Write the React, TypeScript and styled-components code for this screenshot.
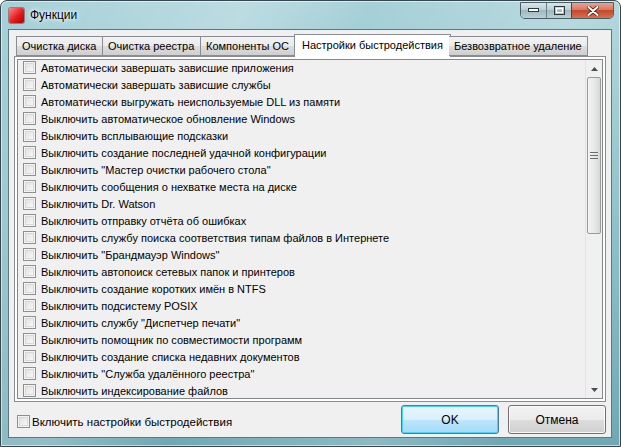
import styled, { createGlobalStyle } from 'styled-components';

const Global = createGlobalStyle`
    html, body {
        margin: 0;
        padding: 0;
        background: #ffffff;
    }
    * {
        box-sizing: border-box;
    }
`

const Window = styled.div`
    width: 621px;
    height: 447px;
    display: flex;
    flex-direction: column;
    padding: 0 8px 8px 7px;
    border: 1px solid #37474f;
    border-radius: 7px 7px 0 0;
    background:
        linear-gradient(115deg, rgba(255,255,255,0) 0%, rgba(255,255,255,0.25) 30%, rgba(255,255,255,0) 45%, rgba(255,255,255,0.2) 70%, rgba(255,255,255,0) 85%),
        linear-gradient(180deg, #a6d1d8 0%, #94c4cc 45%, #6fa8b4 100%);
    box-shadow: inset 0 0 0 1px rgba(255,255,255,0.55);
    font-family: "Liberation Sans", Arial, sans-serif;
    color: #000;
`

const TitleBar = styled.div`
    height: 28px;
    display: flex;
    align-items: flex-start;
`

const TitleIcon = styled.div`
    width: 15px;
    height: 15px;
    margin: 7px 6px 0 1px;
    border-radius: 2px;
    background: linear-gradient(135deg, #ff8a8a 0%, #e81c1c 55%, #a80000 100%);
    box-shadow: 0 0 0 1px rgba(120,0,0,0.4);
`

const Title = styled.div`
    margin-top: 7px;
    font-size: 12px;
    text-shadow: 0 0 6px #ffffff, 0 0 3px #ffffff;
    flex: 1;
`

const Caption = styled.div`
    display: flex;
    margin-top: 1px;
    margin-right: -2px;
    border: 1px solid #4a5e66;
    border-radius: 0 0 5px 5px;
    overflow: hidden;
    height: 17px;
`

const CapButton = styled.div<{ $close?: boolean; $w: number }>`
    width: ${p => p.$w}px;
    height: 100%;
    display: flex;
    align-items: center;
    justify-content: center;
    border-left: ${p => (p.$close ? '1px solid #6b3a33' : '1px solid #6a8088')};
    background: ${p => p.$close
        ? 'linear-gradient(180deg, #e8a493 0%, #d9775f 45%, #c24a2e 50%, #d86f4c 100%)'
        : 'linear-gradient(180deg, #d8e6ea 0%, #b9cfd5 45%, #9fb9c1 50%, #b8d1d7 100%)'};
    &:first-child {
        border-left: none;
    }
`

const Client = styled.div`
    flex: 1;
    display: flex;
    flex-direction: column;
    background: #f0f0f0;
    border: 1px solid #5d7680;
    padding: 3px 5px 0 5px;
`

const TabStrip = styled.div`
    display: flex;
    align-items: flex-end;
    height: 23px;
    padding-left: 2px;
    position: relative;
    z-index: 1;
`

const Tab = styled.div<{ $active?: boolean; $w: number }>`
    width: ${p => p.$w}px;
    height: ${p => (p.$active ? '23px' : '20px')};
    margin: ${p => (p.$active ? '0 -2px -1px' : '0')};
    padding: ${p => (p.$active ? '4px 0 0 7px' : '3px 0 0 5px')};
    font-size: 11px;
    border: 1px solid #898c95;
    border-bottom: ${p => (p.$active ? 'none' : '1px solid #898c95')};
    border-left: ${p => (p.$active ? '1px solid #898c95' : 'none')};
    background: ${p => p.$active
        ? '#ffffff'
        : 'linear-gradient(180deg, #f2f2f2 0%, #ebebeb 50%, #dddddd 51%, #cfcfcf 100%)'};
    white-space: nowrap;
    &:first-child {
        border-left: 1px solid #898c95;
    }
`

const Panel = styled.div`
    height: 346px;
    border: 1px solid #898c95;
    background: #ffffff;
    padding: 2px;
    display: flex;
`

const ListBox = styled.div`
    flex: 1;
    display: flex;
    border: 1px solid #828790;
    background: #f0f0f0;
`

const Items = styled.div`
    flex: 1;
    overflow: hidden;
`

const Row = styled.div`
    height: 17px;
    display: flex;
    align-items: center;
    padding: 0 0 2px 5px;
    font-size: 11px;
    white-space: nowrap;
`

const Box = styled.span`
    width: 13px;
    height: 13px;
    flex: none;
    margin-right: 5px;
    border: 1px solid #8e8f8f;
    background: linear-gradient(135deg, #dcdcdc 0%, #f0f0f0 60%, #ffffff 100%);
    box-shadow: inset 0 0 0 1px #f4f4f4, inset 0 0 0 2px #d8d8d8;
`

const ScrollBar = styled.div`
    width: 17px;
    display: flex;
    flex-direction: column;
    background: #f0f0f0;
    border-left: 1px solid #e3e3e3;
`

const Arrow = styled.div`
    height: 17px;
    display: flex;
    align-items: center;
    justify-content: center;
    flex: none;
`

const Thumb = styled.div`
    height: 157px;
    flex: none;
    margin: 0 1px;
    border: 1px solid #9a9a9a;
    border-radius: 2px;
    background: linear-gradient(90deg, #f4f4f4 0%, #e9e9e9 50%, #d7d7d7 100%);
    display: flex;
    align-items: center;
    justify-content: center;
`

const Track = styled.div`
    flex: 1;
`

const Footer = styled.div`
    flex: 1;
    display: flex;
    align-items: center;
    padding: 0 0 0 3px;
`

const FooterCheck = styled.label`
    flex: 1;
    display: flex;
    align-items: center;
    font-size: 11.5px;
    margin-top: 4px;
    ${Box} {
        margin-right: 2px;
    }
`

const Button = styled.div<{ $default?: boolean }>`
    width: 98px;
    height: 29px;
    margin-left: 9px;
    display: flex;
    align-items: center;
    justify-content: center;
    font-size: 12px;
    border-radius: 3px;
    border: 1px solid ${p => (p.$default ? '#3c7fb1' : '#707070')};
    background: ${p => p.$default
        ? 'linear-gradient(180deg, #eaf6fd 0%, #d9f0fc 50%, #bee6fd 51%, #a7d9f5 100%)'
        : 'linear-gradient(180deg, #f2f2f2 0%, #ebebeb 50%, #dddddd 51%, #cfcfcf 100%)'};
    box-shadow: inset 0 0 0 1px ${p => (p.$default ? '#48d4f7' : 'rgba(255,255,255,0.8)')};
`

const tabs = [
    { label: 'Очистка диска', w: 87 },
    { label: 'Очистка реестра', w: 98 },
    { label: 'Компоненты ОС', w: 95 },
    { label: 'Настройки быстродействия', w: 157 },
    { label: 'Безвозвратное удаление', w: 139 },
]

const options = [
    'Автоматически завершать зависшие приложения',
    'Автоматически завершать зависшие службы',
    'Автоматически выгружать неиспользуемые DLL из памяти',
    'Выключить автоматическое обновление Windows',
    'Выключить всплывающие подсказки',
    'Выключить создание последней удачной конфигурации',
    'Выключить "Мастер очистки рабочего стола"',
    'Выключить сообщения о нехватке места на диске',
    'Выключить Dr. Watson',
    'Выключить отправку отчёта об ошибках',
    'Выключить службу поиска соответствия типам файлов в Интернете',
    'Выключить "Брандмауэр Windows"',
    'Выключить автопоиск сетевых папок и принтеров',
    'Выключить создание коротких имён в NTFS',
    'Выключить подсистему POSIX',
    'Выключить службу "Диспетчер печати"',
    'Выключить помощник по совместимости программ',
    'Выключить создание списка недавних документов',
    'Выключить "Служба удалённого реестра"',
    'Выключить индексирование файлов',
]

function App() {
    return (
        <>
            <Global />
            <Window>
                <TitleBar>
                    <TitleIcon />
                    <Title>Функции</Title>
                    <Caption>
                        <CapButton $w={25}>
                            <svg width="11" height="5"><rect x="0.5" y="0.5" width="10" height="3" fill="#fff" stroke="#2c3a40" /></svg>
                        </CapButton>
                        <CapButton $w={25}>
                            <svg width="11" height="9"><rect x="0.5" y="0.5" width="10" height="8" fill="none" stroke="#2c3a40" /><rect x="2.5" y="2.5" width="6" height="4" fill="none" stroke="#fff" /></svg>
                        </CapButton>
                        <CapButton $w={42} $close>
                            <svg width="12" height="10"><path d="M1.5 1 L10.5 9 M10.5 1 L1.5 9" stroke="#5a1a10" strokeWidth="3.6" strokeLinecap="round" /><path d="M1.5 1 L10.5 9 M10.5 1 L1.5 9" stroke="#ffffff" strokeWidth="2" strokeLinecap="round" /></svg>
                        </CapButton>
                    </Caption>
                </TitleBar>
                <Client>
                    <TabStrip>
                        {tabs.map((t, i) => (
                            <Tab key={t.label} $w={t.w} $active={i === 3}>{t.label}</Tab>
                        ))}
                    </TabStrip>
                    <Panel>
                        <ListBox>
                            <Items>
                                {options.map(o => (
                                    <Row key={o}><Box />{o}</Row>
                                ))}
                            </Items>
                            <ScrollBar>
                                <Arrow>
                                    <svg width="7" height="4"><path d="M0 4 L3.5 0 L7 4 Z" fill="#4d4d4d" /></svg>
                                </Arrow>
                                <Thumb>
                                    <svg width="8" height="7"><path d="M0 0.5 H8 M0 3.5 H8 M0 6.5 H8" stroke="#6f6f6f" /></svg>
                                </Thumb>
                                <Track />
                                <Arrow>
                                    <svg width="7" height="4"><path d="M0 0 L7 0 L3.5 4 Z" fill="#4d4d4d" /></svg>
                                </Arrow>
                            </ScrollBar>
                        </ListBox>
                    </Panel>
                    <Footer>
                        <FooterCheck><Box />Включить настройки быстродействия</FooterCheck>
                        <Button $default>OK</Button>
                        <Button>Отмена</Button>
                    </Footer>
                </Client>
            </Window>
        </>
    )
}

export default App
